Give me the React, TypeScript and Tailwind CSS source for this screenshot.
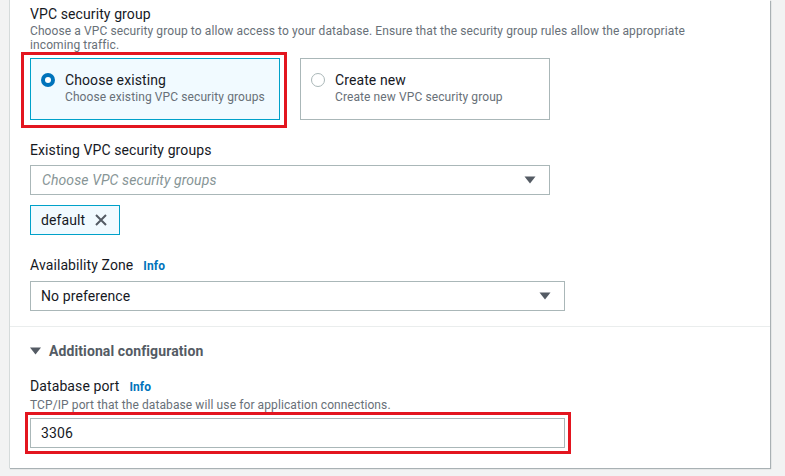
import React from "react";

const font = { fontFamily: "Roboto, 'Liberation Sans', Arial, sans-serif" };

function Caret() {
  return (
    <svg width="12" height="8" viewBox="0 0 12 8" className="shrink-0">
      <path d="M0.5 0.5 L11.5 0.5 L6 7.5 Z" fill="#545b64" />
    </svg>
  );
}

function Info() {
  return <span className="ml-[10px] text-[12px] font-bold text-[#0073bb]">Info</span>;
}

export default function App() {
  return (
    <div className="min-h-[476px] w-[785px] bg-[#f2f3f3] tracking-[0.1px] text-[#16191f]" style={font}>
      <div className="ml-[9px] w-[761px] border-l border-[#d5dbdb] bg-white shadow-[1px_1px_1px_0_rgba(0,28,36,0.3)]">
        <div className="px-[20px] pt-[4px]">
          <div className="text-[14px] leading-[20px]">VPC security group</div>
          <div className="w-[690px] text-[12px] leading-[14px] text-[#687078]">
            Choose a VPC security group to allow access to your database. Ensure that the security group rules allow the
            appropriate incoming traffic.
          </div>
          <div className="relative mt-[6px] grid w-[520px] grid-cols-2 gap-[20px]">
            <div className="flex h-[62px] gap-[10px] border border-[#00a1c9] bg-[#f1faff] px-[10px] pt-[12px]">
              <div className="mt-[2px] flex h-[14px] w-[14px] shrink-0 items-center justify-center rounded-full bg-[#0073bb]">
                <div className="h-[6px] w-[6px] rounded-full bg-white" />
              </div>
              <div>
                <div className="text-[14px] leading-[18px]">Choose existing</div>
                <div className="text-[12px] leading-[16px] text-[#687078]">Choose existing VPC security groups</div>
              </div>
            </div>
            <div className="flex h-[62px] gap-[10px] border border-[#aab7b8] bg-white px-[10px] pt-[12px]">
              <div className="mt-[2px] h-[14px] w-[14px] shrink-0 rounded-full border border-[#aab7b8] bg-white" />
              <div>
                <div className="text-[14px] leading-[18px]">Create new</div>
                <div className="text-[12px] leading-[16px] text-[#687078]">Create new VPC security group</div>
              </div>
            </div>
            <div className="pointer-events-none absolute left-[-9px] top-[-6px] h-[76px] w-[266px] border-[3px] border-[#e3151f]" />
          </div>

          <div className="mt-[20px] text-[14px] leading-[20px]">Existing VPC security groups</div>
          <div className="mt-[5px] flex h-[30px] w-[520px] items-center justify-between border border-[#aab7b8] pl-[11px] pr-[13px]">
            <span className="text-[14px] italic text-[#879596]">Choose VPC security groups</span>
            <Caret />
          </div>
          <div className="mt-[10px] flex h-[30px] w-[90px] items-center gap-[10px] border border-[#00a1c9] bg-[#f1faff] pl-[10px]">
            <span className="text-[14px]">default</span>
            <svg width="12" height="12" viewBox="0 0 12 12">
              <path d="M1 1 L11 11 M11 1 L1 11" stroke="#545b64" strokeWidth="2" />
            </svg>
          </div>

          <div className="mt-[20px] flex items-baseline text-[14px] leading-[20px]">
            Availability Zone
            <Info />
          </div>
          <div className="mt-[5px] flex h-[30px] w-[535px] items-center justify-between border border-[#aab7b8] pl-[10px] pr-[13px]">
            <span className="text-[14px]">No preference</span>
            <Caret />
          </div>
        </div>

        <div className="mt-[15px] border-t border-[#eaeded]" />

        <div className="px-[20px] pb-[20px]">
          <div className="mt-[14px] flex items-center gap-[8px] text-[14px] font-bold leading-[20px] text-[#545b64]">
            <svg width="11" height="8" viewBox="0 0 11 8">
              <path d="M0 0.5 L11 0.5 L5.5 7.5 Z" fill="#545b64" />
            </svg>
            Additional configuration
          </div>
          <div className="mt-[15px] flex items-baseline text-[14px] leading-[20px]">
            Database port
            <Info />
          </div>
          <div className="text-[12px] leading-[16px] text-[#687078]">
            TCP/IP port that the database will use for application connections.
          </div>
          <div className="relative mt-[5px] w-[535px]">
            <div className="flex h-[30px] items-center border border-[#aab7b8] pl-[10px]">
              <span className="text-[14px]">3306</span>
            </div>
            <div className="pointer-events-none absolute left-[-5px] top-[-6px] h-[42px] w-[546px] border-[3px] border-[#e3151f]" />
          </div>
        </div>
      </div>
    </div>
  );
}
